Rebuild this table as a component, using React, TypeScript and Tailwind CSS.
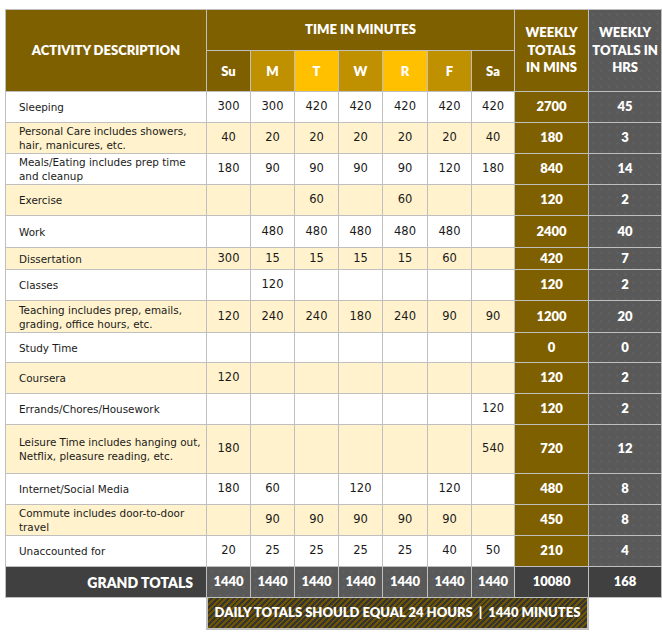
type Row = {
  label: string[];
  days: (number | null)[];
  mins: number;
  hrs: number;
  height: string;
};

const _ = null;

const rows: Row[] = [
  { label: ["Sleeping"], days: [300, 300, 420, 420, 420, 420, 420], mins: 2700, hrs: 45, height: "h-[31px]" },
  { label: ["Personal Care includes showers,", "hair, manicures, etc."], days: [40, 20, 20, 20, 20, 20, 40], mins: 180, hrs: 3, height: "h-[31px]" },
  { label: ["Meals/Eating includes prep time", "and cleanup"], days: [180, 90, 90, 90, 90, 120, 180], mins: 840, hrs: 14, height: "h-[31px]" },
  { label: ["Exercise"], days: [_, _, 60, _, 60, _, _], mins: 120, hrs: 2, height: "h-[31px]" },
  { label: ["Work"], days: [_, 480, 480, 480, 480, 480, _], mins: 2400, hrs: 40, height: "h-[32px]" },
  { label: ["Dissertation"], days: [300, 15, 15, 15, 15, 60, _], mins: 420, hrs: 7, height: "h-[22px]" },
  { label: ["Classes"], days: [_, 120, _, _, _, _, _], mins: 120, hrs: 2, height: "h-[31px]" },
  { label: ["Teaching includes prep, emails,", "grading, office hours, etc."], days: [120, 240, 240, 180, 240, 90, 90], mins: 1200, hrs: 20, height: "h-[32px]" },
  { label: ["Study Time"], days: [_, _, _, _, _, _, _], mins: 0, hrs: 0, height: "h-[30px]" },
  { label: ["Coursera"], days: [120, _, _, _, _, _, _], mins: 120, hrs: 2, height: "h-[31px]" },
  { label: ["Errands/Chores/Housework"], days: [_, _, _, _, _, _, 120], mins: 120, hrs: 2, height: "h-[31px]" },
  { label: ["Leisure Time includes hanging out,", "Netflix, pleasure reading, etc."], days: [180, _, _, _, _, _, 540], mins: 720, hrs: 12, height: "h-[49px]" },
  { label: ["Internet/Social Media"], days: [180, 60, _, 120, _, 120, _], mins: 480, hrs: 8, height: "h-[31px]" },
  { label: ["Commute includes door-to-door", "travel"], days: [_, 90, 90, 90, 90, 90, _], mins: 450, hrs: 8, height: "h-[31px]" },
  { label: ["Unaccounted for"], days: [20, 25, 25, 25, 25, 40, 50], mins: 210, hrs: 4, height: "h-[31px]" },
];

const dayHeads = [
  { d: "Su", bg: "bg-[#7f6000]" },
  { d: "M", bg: "bg-[#bf9000]" },
  { d: "T", bg: "bg-[#ffc000]" },
  { d: "W", bg: "bg-[#bf9000]" },
  { d: "R", bg: "bg-[#ffc000]" },
  { d: "F", bg: "bg-[#bf9000]" },
  { d: "Sa", bg: "bg-[#7f6000]" },
];

const line = "border border-[#bfbfbf]";
const head = "font-['Lato',sans-serif] font-extrabold text-white text-[13px]";
// speckled grey used by the hours column and the daily grand totals
const dotted =
  "bg-[#595959] bg-[radial-gradient(circle,#636363_0.7px,transparent_0.9px)] bg-[length:8px_8px]";

export default function App() {
  return (
    <div className="w-[662px] h-[632px] bg-white pt-[9px] pl-[5px] font-['DejaVu_Sans',sans-serif]">
      <table className="table-fixed border-collapse w-[656px]">
        <colgroup>
          <col className="w-[201px]" />
          <col className="w-[44px]" />
          <col className="w-[44px]" />
          <col className="w-[44px]" />
          <col className="w-[44px]" />
          <col className="w-[45px]" />
          <col className="w-[44px]" />
          <col className="w-[43px]" />
          <col className="w-[74px]" />
          <col className="w-[73px]" />
        </colgroup>
        <thead>
          <tr className="h-[41px]">
            <th rowSpan={2} className={`${line} ${head} bg-[#7f6000] text-center`}>
              ACTIVITY DESCRIPTION
            </th>
            <th colSpan={7} className={`${line} ${head} bg-[#7f6000] text-center`}>
              TIME IN MINUTES
            </th>
            <th rowSpan={2} className={`${line} ${head} bg-[#7f6000] text-center leading-[17.5px]`}>
              WEEKLY
              <br />
              TOTALS
              <br />
              IN MINS
            </th>
            <th rowSpan={2} className={`${line} ${head} ${dotted} text-center leading-[17.5px]`}>
              WEEKLY
              <br />
              TOTALS IN
              <br />
              HRS
            </th>
          </tr>
          <tr className="h-[41px]">
            {dayHeads.map((h) => (
              <th key={h.d} className={`${line} ${head} ${h.bg} text-center pt-[2px]`}>
                {h.d}
              </th>
            ))}
          </tr>
        </thead>
        <tbody>
          {rows.map((r, i) => (
            <tr key={i} className={`${r.height} ${i % 2 === 0 ? "bg-white" : "bg-[#fff2cc]"}`}>
              <td className={`${line} pl-[13px] text-[10.4px] leading-[14px] text-[#1a1a1a] whitespace-nowrap overflow-hidden`}>
                {r.label.map((l, j) => (
                  <div key={j}>{l}</div>
                ))}
              </td>
              {r.days.map((v, j) => (
                <td key={j} className={`${line} text-center text-[11.5px] text-[#1a1a1a]`}>
                  {v ?? ""}
                </td>
              ))}
              <td className={`${line} ${head} text-[12.5px] bg-[#7f6000] text-center`}>{r.mins}</td>
              <td className={`${line} ${head} text-[12.5px] ${dotted} text-center`}>{r.hrs}</td>
            </tr>
          ))}
          <tr className="h-[31px]">
            <td className={`${line} ${head} text-[14px] bg-[#404040] text-right pr-[13px]`}>GRAND TOTALS</td>
            {dayHeads.map((h) => (
              <td key={h.d} className={`${line} ${head} text-[12.5px] ${dotted} text-center`}>
                1440
              </td>
            ))}
            <td className={`${line} ${head} text-[12.5px] bg-[#404040] text-center`}>10080</td>
            <td className={`${line} ${head} text-[12.5px] bg-[#404040] text-center`}>168</td>
          </tr>
        </tbody>
      </table>
      <div className="flex">
        <div className="w-[201px]" />
        <div className="w-[383px] h-[32px] border-2 border-t-0 border-[#bfbfbf] bg-[repeating-linear-gradient(135deg,#6f5400_0px,#6f5400_2px,#343434_2px,#343434_4px)] flex items-center justify-center">
          <span className={`${head} whitespace-pre`}>DAILY TOTALS SHOULD EQUAL 24 HOURS  |  1440 MINUTES</span>
        </div>
      </div>
    </div>
  );
}
